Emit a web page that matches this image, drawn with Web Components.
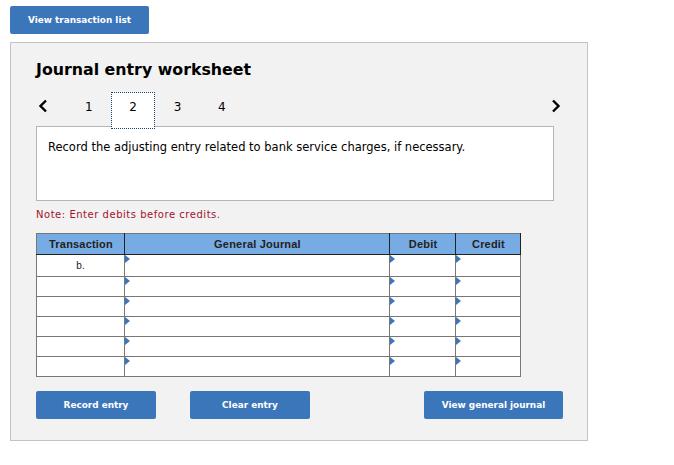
<!DOCTYPE html>
<html>
<head>
<meta charset="utf-8">
<title>Journal entry worksheet</title>
<style>
  body {
    background-color: #ffffff;
    font-family: 'DejaVu Sans', Verdana, sans-serif;
    margin: 0;
    padding: 6px 0 0 10px;
  }
</style>
</head>
<body>
<je-button width="139">View transaction list</je-button>
<je-worksheet>
  <je-tabs active="2"></je-tabs>
  <je-prompt>Record the adjusting entry related to bank service charges, if necessary.</je-prompt>
  <je-journal></je-journal>
  <je-actions>
    <je-button width="120">Record entry</je-button>
    <je-button width="120">Clear entry</je-button>
    <je-button width="139">View general journal</je-button>
  </je-actions>
</je-worksheet>
<script>
class JeButton extends HTMLElement {
  constructor() {
    super();
    this.attachShadow( {mode: 'open'} );
    this.shadowRoot.innerHTML = `
      <style>
        :host {
          align-items: center;
          background-color: #3b76bb;
          border-radius: 2px;
          box-sizing: border-box;
          color: #ffffff;
          display: flex;
          font-family: 'DejaVu Sans', Verdana, sans-serif;
          font-size: 8.9px;
          font-weight: 700;
          height: 28px;
          justify-content: center;
          width: ${this.getAttribute( 'width' )}px;
        }
      </style>
      <slot></slot>
    `;
  }
}

class JeWorksheet extends HTMLElement {
  constructor() {
    super();
    this.attachShadow( {mode: 'open'} );
    this.shadowRoot.innerHTML = `
      <style>
        :host {
          background-color: #f2f2f2;
          border: 1px solid #c3c3c3;
          box-sizing: border-box;
          display: block;
          height: 399px;
          margin-top: 8px;
          padding: 16px 25px 0 25px;
          width: 578px;
        }
        h2 {
          color: #000000;
          font-size: 15.8px;
          font-weight: 700;
          line-height: 21px;
          margin: 0 0 12px 0;
        }
      </style>
      <h2>Journal entry worksheet</h2>
      <slot></slot>
    `;
  }
}

class JeTabs extends HTMLElement {
  constructor() {
    super();
    this.attachShadow( {mode: 'open'} );
    const active = this.getAttribute( 'active' );
    const tabs = [1, 2, 3, 4].map( ( n ) => {
      return `<span class="tab${String( n ) === active ? ' on' : ''}">${n}</span>`;
    } ).join( '' );
    this.shadowRoot.innerHTML = `
      <style>
        :host {
          align-items: flex-start;
          display: flex;
          height: 34px;
          position: relative;
          width: 528px;
          z-index: 1;
        }
        svg {
          display: block;
          flex: none;
          height: 14px;
          margin-top: 7px;
          width: 10px;
        }
        .prev {
          margin-left: 2px;
          margin-right: 18.5px;
        }
        .next {
          margin-left: auto;
          margin-right: 3px;
        }
        .tab {
          box-sizing: border-box;
          color: #000000;
          flex: none;
          font-size: 12px;
          height: 37px;
          line-height: 30px;
          text-align: center;
          width: 44.4px;
        }
        .on {
          background-color: #ffffff;
          outline: 1px dotted #1c3f6e;
          outline-offset: -1px;
        }
      </style>
      <svg class="prev" viewBox="0 0 10 14"><path d="M8 1.5 2.500 7 8 12.5" fill="none" stroke="#000000" stroke-width="2.4"/></svg>
      ${tabs}
      <svg class="next" viewBox="0 0 10 14"><path d="M2 1.5 7.500 7 2 12.5" fill="none" stroke="#000000" stroke-width="2.4"/></svg>
    `;
  }
}

class JePrompt extends HTMLElement {
  constructor() {
    super();
    this.attachShadow( {mode: 'open'} );
    this.shadowRoot.innerHTML = `
      <style>
        :host {
          display: block;
        }
        .box {
          background-color: #ffffff;
          border: 1px solid #b5b5b5;
          box-sizing: border-box;
          color: #000000;
          font-size: 11.5px;
          height: 75px;
          line-height: 16px;
          padding: 12px 11px;
          width: 518px;
        }
        .note {
          color: #a3122c;
          font-size: 10px;
          letter-spacing: 0.53px;
          line-height: 14px;
          margin: 7px 0 11px 0;
        }
      </style>
      <div class="box"><slot></slot></div>
      <div class="note">Note: Enter debits before credits.</div>
    `;
  }
}

class JeJournal extends HTMLElement {
  constructor() {
    super();
    this.attachShadow( {mode: 'open'} );
    const marker = '<i></i>';
    const rows = ['b.', '', '', '', '', ''].map( ( label ) => `
      <tr>
        <td class="t">${label}</td>
        <td>${marker}</td>
        <td>${marker}</td>
        <td>${marker}</td>
      </tr>
    ` ).join( '' );
    this.shadowRoot.innerHTML = `
      <style>
        :host {
          display: block;
          font-family: 'Liberation Sans', Arial, sans-serif;
          width: 485px;
        }
        table {
          background-color: #ffffff;
          border-collapse: collapse;
          table-layout: fixed;
          width: 484px;
        }
        th {
          background-color: #76abe4;
          border: 1px solid #222222;
          border-top-color: #777777;
          border-left-color: #777777;
          color: #222222;
          font-size: 11px;
          font-weight: 700;
          height: 20px;
          letter-spacing: 0.2px;
          padding: 0 0 0 1px;
        }
        th + th {
          border-left-color: #222222;
        }
        td {
          border: 1px solid #777777;
          height: 19px;
          padding: 0;
          position: relative;
        }
        tr:first-child td {
          height: 21px;
        }
        .t {
          color: #222222;
          font-size: 10px;
          text-align: center;
        }
        i {
          border-bottom: 4px solid transparent;
          border-left: 5px solid #3b76bb;
          border-top: 4px solid transparent;
          height: 0;
          left: 0;
          position: absolute;
          top: 0;
          width: 0;
        }
      </style>
      <table>
        <colgroup>
          <col style="width: 88px">
          <col style="width: 265px">
          <col style="width: 66px">
          <col style="width: 65px">
        </colgroup>
        <thead>
          <tr><th>Transaction</th><th>General Journal</th><th>Debit</th><th>Credit</th></tr>
        </thead>
        <tbody>${rows}</tbody>
      </table>
    `;
  }
}

class JeActions extends HTMLElement {
  constructor() {
    super();
    this.attachShadow( {mode: 'open'} );
    this.shadowRoot.innerHTML = `
      <style>
        :host {
          display: grid;
          grid-template-columns: 154px 234px 139px;
          margin-top: 14px;
        }
      </style>
      <slot></slot>
    `;
  }
}

window.customElements.define( 'je-button', JeButton );
window.customElements.define( 'je-worksheet', JeWorksheet );
window.customElements.define( 'je-tabs', JeTabs );
window.customElements.define( 'je-prompt', JePrompt );
window.customElements.define( 'je-journal', JeJournal );
window.customElements.define( 'je-actions', JeActions );
</script>
</body>
</html>
